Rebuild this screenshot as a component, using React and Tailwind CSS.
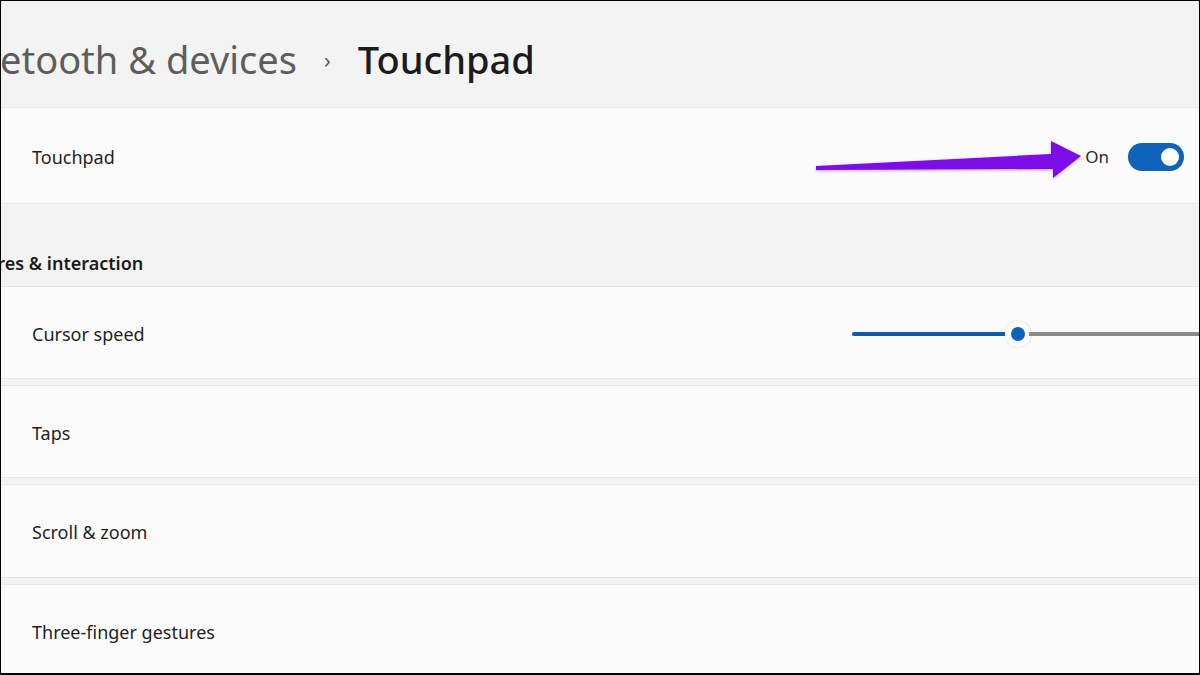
import React from 'react';

const font = { fontFamily: '"Noto Sans", "Open Sans", sans-serif' };

const Row = ({ label, children, className = '' }) => (
  <div className={`flex items-center justify-between bg-[#fbfbfb] border-y border-[#e6e6e6] pl-[31px] pt-[3px] ${className}`}>
    <span className="text-[18px] text-[#1f1f1f]">{label}</span>
    {children}
  </div>
);

const Arrow = () => (
  <svg className="absolute left-[812px] top-[137px]" width="272" height="44" viewBox="0 0 272 44">
    <defs>
      <filter id="sh" x="-10%" y="-50%" width="120%" height="200%">
        <feDropShadow dx="0" dy="1" stdDeviation="1.5" floodColor="#7a2bd0" floodOpacity="0.45" />
      </filter>
    </defs>
    <path d="M3 28 L238 16 L238 3 L268 18 L240 40 L240 31 L3 32 Z" fill="#7d0fe6" filter="url(#sh)" />
  </svg>
);

export default function App() {
  return (
    <div className="w-[1200px] h-[675px] overflow-hidden bg-[#f3f3f3] border-l border-t border-r border-b-2 border-black flex flex-col relative" style={font}>
      <div className="h-[106px] shrink-0 flex items-center gap-[27px] -ml-[59px] pt-[10px]">
        <span className="text-[38px] text-[#5d5d5d]">Bluetooth &amp; devices</span>
        <span className="text-[22px] text-[#5d5d5d]">›</span>
        <span className="text-[38px] font-medium text-[#1b1b1b]">Touchpad</span>
      </div>

      <Row label="Touchpad" className="h-[97px] shrink-0 pr-[15px]">
        <div className="flex items-center gap-[19px]">
          <span className="text-[17px] text-[#2b2b2b]">On</span>
          <div className="w-[56px] h-[28px] rounded-full bg-[#0f63b8] flex items-center justify-end pr-[5px]">
            <div className="w-[18px] h-[18px] rounded-full bg-white" />
          </div>
        </div>
      </Row>

      <div className="h-[82px] shrink-0 flex items-end pb-[9px] -ml-[55px]">
        <span className="text-[18px] font-semibold text-[#1b1b1b]">Gestures &amp; interaction</span>
      </div>

      <div className="flex flex-col gap-[6px]">
        <Row label="Cursor speed" className="h-[93px] shrink-0">
          <div className="flex items-center w-[347px]">
            <div className="w-[155px] h-[4px] rounded-full bg-[#0f5aa8]" />
            <div className="w-[26px] h-[26px] rounded-full bg-white shadow-[0_0_2px_rgba(0,0,0,0.2)] flex items-center justify-center mx-[-2px]">
              <div className="w-[14px] h-[14px] rounded-full bg-[#0f63b8]" />
            </div>
            <div className="flex-1 h-[4px] bg-[#8a8a8a]" />
          </div>
        </Row>
        <Row label="Taps" className="h-[93px] shrink-0" />
        <Row label="Scroll & zoom" className="h-[94px] shrink-0" />
        <Row label="Three-finger gestures" className="h-[94px] shrink-0" />
      </div>

      <Arrow />
    </div>
  );
}
